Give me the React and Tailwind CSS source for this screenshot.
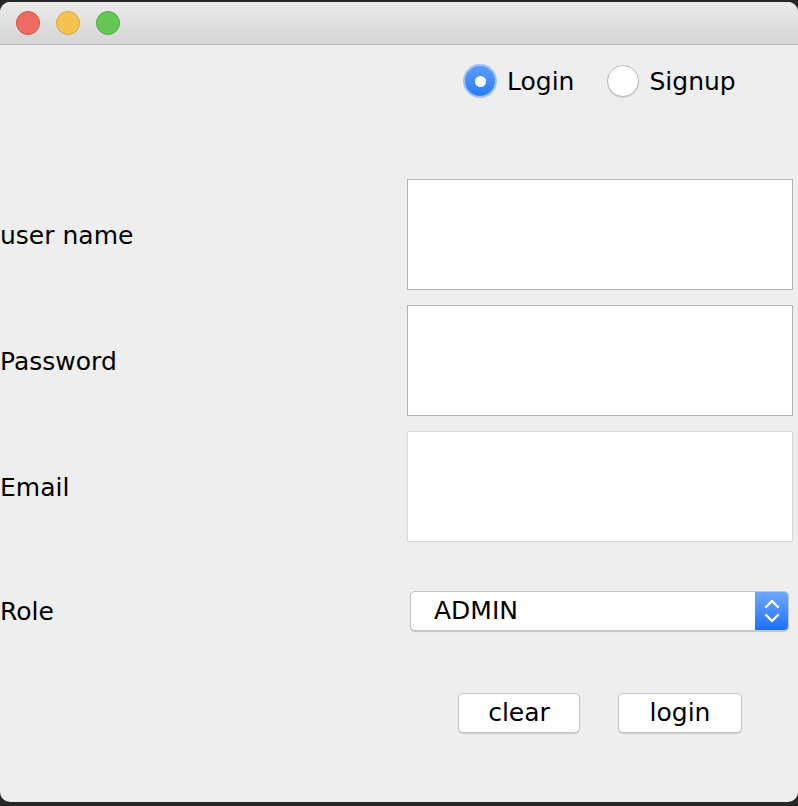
import { useState } from "react";

const font = { fontFamily: '"DejaVu Sans", "Liberation Sans", sans-serif' };

const Radio = ({ label, checked, onClick }) => (
	<button onClick={onClick} className="flex items-center gap-[10px]">
		{checked ? (
			<span className="flex items-center justify-center w-[34px] h-[34px] rounded-full bg-[#9cc3fb]">
				<span className="flex items-center justify-center w-[30px] h-[30px] rounded-full bg-gradient-to-b from-[#5a9cfb] to-[#2a7cf9]">
					<span className="w-[11px] h-[11px] rounded-full bg-white" />
				</span>
			</span>
		) : (
			<span className="w-[32px] h-[32px] rounded-full bg-white border border-[#b9b9b9] shadow-[0_1px_1px_rgba(0,0,0,0.12)]" />
		)}
		<span className="text-[25px] text-black leading-none">{label}</span>
	</button>
);

const Field = ({ label, light }) => (
	<div className="grid grid-cols-[407px_386px] h-[111px]">
		<div className="flex items-center text-[25px] text-black pt-[2px]">{label}</div>
		<input className={"h-full w-full bg-white border outline-none " + (light ? "border-[#d8d8d8]" : "border-[#b2b2b2]")} />
	</div>
);

export default function App() {
	let [mode, setMode] = useState("login");

	return (
		<div className="w-[798px] h-[806px] bg-[#262626] pt-[2px]" style={font}>
			<div className="w-[798px] h-[800px] bg-[#eeeeee] rounded-[10px] overflow-hidden flex flex-col">
				{/* title bar */}
				<div className="h-[43px] flex-none bg-gradient-to-b from-[#ebebeb] to-[#d5d5d5] border-b border-[#b4b4b4] flex items-center gap-[16px] pl-[16px]">
					<span className="w-[24px] h-[24px] rounded-full bg-[#ee6b60] border border-[#d5544a]" />
					<span className="w-[24px] h-[24px] rounded-full bg-[#f6c250] border border-[#dba63b]" />
					<span className="w-[24px] h-[24px] rounded-full bg-[#63c655] border border-[#51a840]" />
				</div>

				<div className="flex flex-col pt-[17px]">
					<div className="h-[36px] flex items-center gap-[33px] pl-[463px] pt-[2px]">
						<Radio label="Login" checked={mode === "login"} onClick={() => setMode("login")} />
						<Radio label="Signup" checked={mode === "signup"} onClick={() => setMode("signup")} />
					</div>

					<div className="flex flex-col gap-[15px] mt-[81px]">
						<Field label="user name" />
						<Field label="Password" />
						<Field label="Email" light />
					</div>

					<div className="grid grid-cols-[410px_379px] h-[40px] mt-[49px]">
						<div className="flex items-center text-[25px] text-black pt-[2px]">Role</div>
						<div className="flex h-full rounded-[5px] bg-white border border-[#c4c4c4] shadow-[0_1px_1px_rgba(0,0,0,0.18)] overflow-hidden">
							<div className="flex-1 flex items-center pl-[23px] text-[25px] text-black">ADMIN</div>
							<div className="w-[33px] h-full flex items-center justify-center bg-gradient-to-b from-[#6ea8fb] to-[#1b6ffb]">
								<svg width="16" height="26" viewBox="0 0 16 26" fill="none" stroke="white" strokeWidth="2.4" strokeLinecap="round" strokeLinejoin="round">
									<path d="M2 9 L8 3 L14 9" />
									<path d="M2 17 L8 23 L14 17" />
								</svg>
							</div>
						</div>
					</div>

					<div className="flex gap-[38px] pl-[458px] mt-[62px]">
						<button className="w-[122px] h-[40px] rounded-[5px] bg-white border border-[#c6c6c6] shadow-[0_1px_1px_rgba(0,0,0,0.15)] text-[25px] text-black">clear</button>
						<button className="w-[124px] h-[40px] rounded-[5px] bg-white border border-[#c6c6c6] shadow-[0_1px_1px_rgba(0,0,0,0.15)] text-[25px] text-black">login</button>
					</div>
				</div>
			</div>
		</div>
	);
}
